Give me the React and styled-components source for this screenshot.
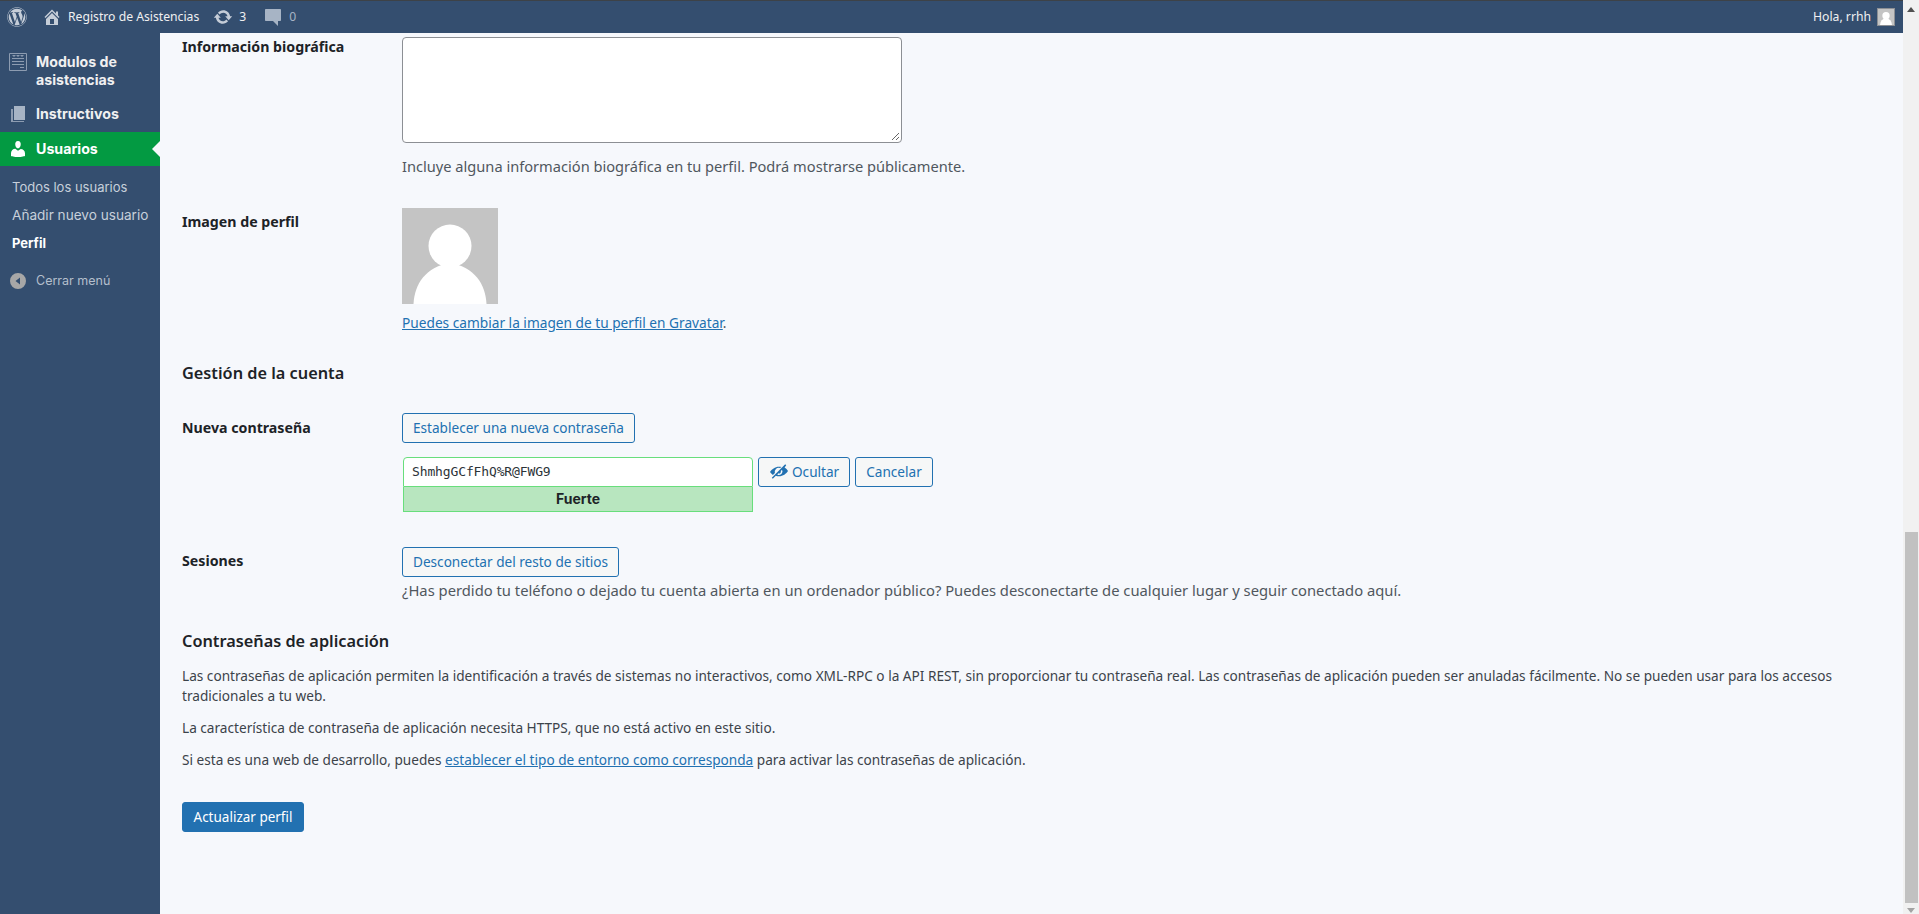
import React from "react";
import styled, { createGlobalStyle } from "styled-components";
import { FaWordpress } from "react-icons/fa";

const Global = createGlobalStyle`
  html, body { margin: 0; padding: 0; height: 100%; overflow: hidden; }
  body { background: #f6f8fc; font-family: "Noto Sans", "Open Sans", sans-serif; color: #3c434a; }
  #root { height: 100%; }
`;

const Page = styled.div`
  display: flex;
  height: 914px;
  width: 1919px;
`;
const Viewport = styled.div`
  width: 1903px;
  display: flex;
  flex-direction: column;
`;
const TopBar = styled.header`
  height: 33px;
  box-sizing: border-box;
  flex: none;
  border-top: 1px solid #3d4247;
  background: #344e6f;
  display: flex;
  align-items: center;
  justify-content: space-between;
  color: #f0f0f1;
  font: 12.2px/32px "Noto Sans", sans-serif;
  padding: 0 8px 0 7px;
`;
const BarGroup = styled.div`
  display: flex;
  align-items: center;
`;
const BarText = styled.span`
  margin-left: ${(p) => p.$ml || 0}px;
  color: ${(p) => (p.$dim ? "#a7b4c5" : "#f0f0f1")};
  white-space: nowrap;
`;
const BarIcon = styled.svg`
  width: ${(p) => p.$s || 20}px;
  height: ${(p) => p.$s || 20}px;
  margin-left: ${(p) => p.$ml || 0}px;
  fill: ${(p) => p.$c || "#c5cdd8"};
  flex: none;
`;
const Logo = styled(FaWordpress)`
  width: 20px;
  height: 20px;
  color: #c5cdd8;
  flex: none;
`;
const BarAvatar = styled.svg`
  width: 16px;
  height: 16px;
  margin-left: 6px;
  border: 1px solid #8c8f94;
  flex: none;
  display: block;
`;
const Body = styled.div`
  flex: 1;
  display: flex;
  min-height: 0;
`;
const Side = styled.nav`
  width: 160px;
  flex: none;
  background: #344e6f;
  padding-top: 20px;
`;
const MenuItem = styled.div`
  display: flex;
  align-items: flex-start;
  height: ${(p) => p.$h}px;
  padding: ${(p) => p.$pt || 0}px 8px 0 9px;
  background: ${(p) => (p.$active ? "#039a42" : "transparent")};
  font: 700 14.2px/18px Inter, sans-serif;
  box-sizing: border-box;
  position: relative;
  color: ${(p) => (p.$active ? "#fff" : "#f0f0f1")};
`;
const MenuIcon = styled.svg`
  width: 18px;
  height: 18px;
  flex: none;
  margin-right: 9px;
  fill: ${(p) => p.$c || "#a7b4c5"};
`;
const Pointer = styled.span`
  position: absolute;
  right: 0;
  top: 9px;
  border: 8px solid transparent;
  border-right-color: #f6f8fc;
  border-left: 0;
`;
const SubMenu = styled.ul`
  list-style: none;
  margin: 0;
  padding: 7px 0 0 12px;
`;
const SubItem = styled.li`
  height: 28px;
  font: ${(p) => (p.$cur ? 700 : 400)} ${(p) => p.$fs || 13}px/28px Inter, sans-serif;
  color: ${(p) => (p.$cur ? "#fff" : "#c7d0db")};
  white-space: nowrap;
`;
const Collapse = styled.div`
  display: flex;
  align-items: center;
  margin-top: 14px;
  padding-left: 9px;
  font: 400 12.5px/20px Inter, sans-serif;
  color: #b4bfcc;
`;
const Main = styled.main`
  flex: 1;
  padding: 4px 0 0 22px;
  min-width: 0;
`;
const Row = styled.div`
  display: grid;
  grid-template-columns: 220px 1fr;
  margin-bottom: ${(p) => p.$mb || 0}px;
`;
const Label = styled.div`
  font: 700 14.2px/20px "Noto Sans", sans-serif;
  color: #1d2327;
  padding-top: ${(p) => p.$pt || 0}px;
`;
const Field = styled.div`
  min-width: 0;
`;
const TextArea = styled.div`
  width: 500px;
  height: 106px;
  box-sizing: border-box;
  border: 1px solid #8c8f94;
  border-radius: 4px;
  background: #fff;
  position: relative;
`;
const Grip = styled.svg`
  position: absolute;
  right: 1px;
  bottom: 1px;
  width: 9px;
  height: 9px;
  stroke: #666;
  fill: none;
`;
const Desc = styled.p`
  margin: ${(p) => p.$mt || 0}px 0 0;
  font: ${(p) => p.$fs}px/20px "Noto Sans", sans-serif;
  color: #50575e;
`;
const Avatar = styled.svg`
  width: 96px;
  height: 96px;
  display: block;
`;
const Link = styled.a`
  color: #2271b1;
  text-decoration: underline;
`;
const Heading = styled.h2`
  margin: ${(p) => p.$mt}px 0 ${(p) => p.$mb}px;
  font: 600 16.3px/20px "Noto Sans", sans-serif;
  color: #1d2327;
`;
const Btn = styled.button`
  display: inline-flex;
  align-items: center;
  height: 30px;
  box-sizing: border-box;
  padding: 0 10px;
  border: 1px solid #2271b1;
  border-radius: 3px;
  background: #f6f7f7;
  color: #2271b1;
  font: 13.6px/28px "Noto Sans", sans-serif;
  white-space: nowrap;
`;
const PassRow = styled.div`
  display: flex;
  align-items: flex-start;
  gap: 5px;
  margin-top: 14px;
  margin-left: 1px;
`;
const PassBox = styled.div`
  width: 350px;
`;
const PassInput = styled.div`
  height: 30px;
  box-sizing: border-box;
  border: 1px solid #68de7c;
  border-radius: 4px 4px 0 0;
  background: #fff;
  padding-left: 8px;
  font: 13px/28px "DejaVu Sans Mono", monospace;
  color: #2c3338;
  letter-spacing: -0.13px;
`;
const Meter = styled.div`
  height: 25px;
  box-sizing: border-box;
  border: 1px solid #68de7c;
  border-top: 0;
  background: #b8e6bf;
  text-align: center;
  font: 700 14px/24px Inter, sans-serif;
  color: #1d2327;
`;
const EyeIcon = styled.svg`
  width: 20px;
  height: 20px;
  margin-right: 3px;
  fill: #2271b1;
`;
const Para = styled.p`
  margin: 0 0 12px;
  width: 1696px;
  font: 13.63px/20px "Noto Sans", sans-serif;
  color: #3c434a;
`;
const Primary = styled.button`
  height: 30px;
  width: 122px;
  box-sizing: border-box;
  margin-top: 20px;
  border: 1px solid #2271b1;
  border-radius: 3px;
  background: #2271b1;
  color: #fff;
  font: 13.5px/28px "Noto Sans", sans-serif;
  padding: 0;
`;
const Scroll = styled.div`
  width: 16px;
  flex: none;
  background: #f1f1f1;
  position: relative;
`;
const Thumb = styled.div`
  position: absolute;
  left: 2px;
  right: 1px;
  top: 532px;
  height: 371px;
  background: #c1c1c1;
`;
const Arrow = styled.span`
  position: absolute;
  left: 4px;
  border: 4px solid transparent;
  ${(p) =>
    p.$up
      ? "top: 7px; border-top: 0; border-bottom: 5px solid #505050;"
      : "bottom: 1px; border-bottom: 0; border-top: 5px solid #a3a3a3;"}
`;

export default function App() {
  return (
    <Page>
      <Global />
      <Viewport>
        <TopBar>
          <BarGroup>
            <Logo />
            <BarIcon viewBox="0 0 20 20" $ml={15}>
              <path d="M16 8.500l1.530 1.530-1.060 1.060L10 4.620l-6.470 6.470-1.060-1.060L10 2.500l4 4v-2h2v4zm-6-2.460l6 5.990V18H4v-5.970zM12 17v-5H8v5h4z" />
            </BarIcon>
            <BarText $ml={6}>Registro de Asistencias</BarText>
            <BarIcon viewBox="0 0 20 20" $ml={14}>
              <path d="M10.200 3.280c3.530 0 6.430 2.610 6.920 6h2.080l-3.500 4-3.500-4h2.320c-.45-1.970-2.210-3.450-4.320-3.450-1.450 0-2.730.71-3.540 1.780L4.950 5.660C6.230 4.200 8.110 3.280 10.200 3.280zm-.4 13.440c-3.520 0-6.430-2.610-6.920-6H.8l3.500-4c1.170 1.330 2.330 2.670 3.500 4H5.480c.45 1.970 2.210 3.450 4.320 3.450 1.450 0 2.730-.71 3.540-1.780l1.710 1.950c-1.280 1.460-3.150 2.380-5.250 2.380z" />
            </BarIcon>
            <BarText $ml={6}>3</BarText>
            <BarIcon viewBox="0 0 20 20" $ml={17} $c="#a7b4c5">
              <path d="M3 2h14c.6 0 1 .4 1 1v10c0 .6-.4 1-1 1h-2v5l-5-5H3c-.6 0-1-.4-1-1V3c0-.6.4-1 1-1z" />
            </BarIcon>
            <BarText $ml={6} $dim>0</BarText>
          </BarGroup>
          <BarGroup>
            <BarText>Hola, rrhh</BarText>
            <BarAvatar viewBox="0 0 96 96">
              <rect width="96" height="96" fill="#c4c4c4" />
              <circle cx="48" cy="40" r="22" fill="#fff" />
              <ellipse cx="48" cy="96" rx="36" ry="40" fill="#fff" />
            </BarAvatar>
          </BarGroup>
        </TopBar>
        <Body>
          <Side>
            <MenuItem $h={46}>
              <MenuIcon viewBox="0 0 18 18" $c="#8d9cb1">
                <path
                  fillRule="evenodd"
                  d="M1 0h16a1 1 0 0 1 1 1v16a1 1 0 0 1-1 1H1a1 1 0 0 1-1-1V1a1 1 0 0 1 1-1zm0 1v16h16V1zm2 1l2 2 2-2zm4 0l2 2 2-2zm4 0l2 2 2-2zM3 5h12v1H3zm0 3h12v1H3zm0 3h12v1H3zm8 3h4v1h-4z"
                />
              </MenuIcon>
              <span>Modulos de asistencias</span>
            </MenuItem>
            <MenuItem $h={33} $pt={6}>
              <MenuIcon viewBox="0 0 18 18">
                <path d="M5 1h11v14H5z" />
                <path d="M2 4h2v12h11v1H2z" fill="#8d9cb1" />
              </MenuIcon>
              <span>Instructivos</span>
            </MenuItem>
            <MenuItem $h={34} $pt={8} $active>
              <MenuIcon viewBox="0 0 18 18" $c="#fff">
                <path d="M9 8.200c-2.200 0-2.700-3.300-2.700-3.300C6 3.100 6.800 1 9 1s3 2.100 2.700 3.900c0 0-.5 3.300-2.700 3.300zm0 2.500l2.700-1.700c2.300 0 4.300 2 4.300 4.200V16s-3.400 1.100-7 1.100S2 16 2 16v-3c0-2.100 2-4.200 4.300-4.200z" />
              </MenuIcon>
              <span>Usuarios</span>
              <Pointer />
            </MenuItem>
            <SubMenu>
              <SubItem>Todos los usuarios</SubItem>
              <SubItem $fs={13.6}>Añadir nuevo usuario</SubItem>
              <SubItem $cur>Perfil</SubItem>
            </SubMenu>
            <Collapse>
              <MenuIcon viewBox="0 0 18 18" $c="#a7a7a7">
                <path d="M9 1a8 8 0 1 1 0 16A8 8 0 0 1 9 1zm2 4.500L6.500 9l4.500 3.500z" fillRule="evenodd" />
              </MenuIcon>
              Cerrar menú
            </Collapse>
          </Side>
          <Main>
            <Row $mb={32}>
              <Label>Información biográfica</Label>
              <Field>
                <TextArea>
                  <Grip viewBox="0 0 9 9">
                    <path d="M1 8l7-7M5 8l3-3" />
                  </Grip>
                </TextArea>
                <Desc $mt={13} $fs={14.64}>Incluye alguna información biográfica en tu perfil. Podrá mostrarse públicamente.</Desc>
              </Field>
            </Row>
            <Row>
              <Label $pt={4}>Imagen de perfil</Label>
              <Field>
                <Avatar viewBox="0 0 96 96">
                  <rect width="96" height="96" fill="#c4c4c4" />
                  <circle cx="48" cy="38" r="21.500" fill="#fff" />
                  <path d="M11.500 96c1-20 12-37 36.500-41 24.500 4 35.500 21 36.500 41z" fill="#fff" />
                </Avatar>
                <Desc $mt={9} $fs={13.7}>
                  <Link>Puedes cambiar la imagen de tu perfil en Gravatar</Link>.
                </Desc>
              </Field>
            </Row>
            <Heading $mt={30} $mb={30}>Gestión de la cuenta</Heading>
            <Row $mb={35}>
              <Label $pt={5}>Nueva contraseña</Label>
              <Field>
                <Btn>Establecer una nueva contraseña</Btn>
                <PassRow>
                  <PassBox>
                    <PassInput>ShmhgGCfFhQ%R@FWG9</PassInput>
                    <Meter>Fuerte</Meter>
                  </PassBox>
                  <Btn>
                    <EyeIcon viewBox="0 0 20 20">
                      <path d="M17.200 3.300l-1-1L2.800 15.700l1 1 3-3c1 .4 2 .6 3.200.6 4 0 7.300-2.600 9-5.300-.8-1.300-2-2.600-3.400-3.500zM10 13a3 3 0 0 1-1.700-.5l1.200-1.200a1.800 1.800 0 0 0 2.300-2.300l1.200-1.200A3.500 3.500 0 0 1 10 13zM10 4.700C6 4.700 2.700 7.300 1 10c.7 1.100 1.700 2.200 2.900 3.100l2-2A4 4 0 0 1 11 6.100l1.500-1.200c-.8-.1-1.600-.2-2.500-.2z" />
                    </EyeIcon>
                    Ocultar
                  </Btn>
                  <Btn>Cancelar</Btn>
                </PassRow>
              </Field>
            </Row>
            <Row>
              <Label $pt={4}>Sesiones</Label>
              <Field>
                <Btn>Desconectar del resto de sitios</Btn>
                <Desc $mt={3} $fs={14.77}>¿Has perdido tu teléfono o dejado tu cuenta abierta en un ordenador público? Puedes desconectarte de cualquier lugar y seguir conectado aquí.</Desc>
              </Field>
            </Row>
            <Heading $mt={31} $mb={15}>Contraseñas de aplicación</Heading>
            <Para>
              Las contraseñas de aplicación permiten la identificación a través de sistemas no interactivos, como XML-RPC o la API REST, sin proporcionar tu contraseña real. Las contraseñas de aplicación pueden ser anuladas fácilmente. No se pueden usar para los accesos tradicionales a tu web.
            </Para>
            <Para>La característica de contraseña de aplicación necesita HTTPS, que no está activo en este sitio.</Para>
            <Para>
              Si esta es una web de desarrollo, puedes <Link>establecer el tipo de entorno como corresponda</Link> para activar las contraseñas de aplicación.
            </Para>
            <Primary>Actualizar perfil</Primary>
          </Main>
        </Body>
      </Viewport>
      <Scroll>
        <Arrow $up />
        <Thumb />
        <Arrow />
      </Scroll>
    </Page>
  );
}
